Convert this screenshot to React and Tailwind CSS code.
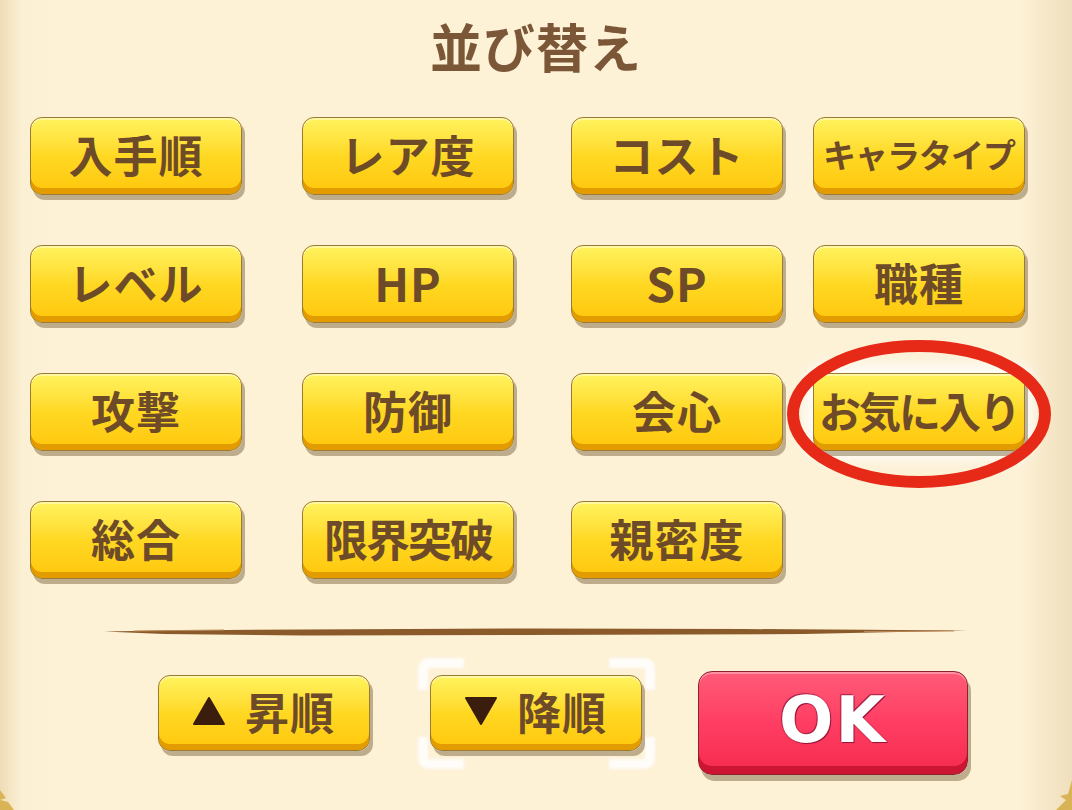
const FONT = { fontFamily: '"Noto Sans CJK JP", "Noto Sans", sans-serif' }

const rows = [
  [{ t: '入手順' }, { t: 'レア度' }, { t: 'コスト' }, { t: 'キャラタイプ', size: 'text-[33px] tracking-[-1px]' }],
  [{ t: 'レベル' }, { t: 'HP', size: 'text-[46px] tracking-[1px]' }, { t: 'SP', size: 'text-[46px] tracking-[1px]' }, { t: '職種' }],
  [{ t: '攻撃' }, { t: '防御' }, { t: '会心' }, { t: 'お気に入り', size: 'text-[42px] tracking-[-2px]', glow: true }],
  [{ t: '総合' }, { t: '限界突破', size: 'text-[44px] tracking-[-2px]' }, { t: '親密度' }],
]

function YellowButton({ children, className = '', textClass = 'text-[44px]', glow }) {
  return (
    <div
      className={
        'flex items-center justify-center rounded-[12px] border border-[#9c7a34] bg-linear-to-b from-[#fff35c] via-[#ffd822] to-[#ffc70a] ' +
        (glow
          ? 'shadow-[inset_0_-6px_0_#e39c00,inset_0_2px_0_#fff8a0,3px_5px_0_rgba(110,90,50,0.45),0_0_14px_8px_rgba(255,255,255,0.9)] '
          : 'shadow-[inset_0_-6px_0_#e39c00,inset_0_2px_0_#fff8a0,3px_5px_0_rgba(110,90,50,0.45)] ') +
        className
      }
    >
      <span className={'font-bold leading-none text-[#6e4b28] pb-[4px] whitespace-nowrap ' + textClass}>{children}</span>
    </div>
  )
}

function Corner({ className }) {
  return <div className={'absolute border-white/85 blur-[1.5px] ' + className} />
}

export default function App() {
  return (
    <div
      style={FONT}
      className="relative w-[1072px] h-[810px] overflow-hidden bg-[linear-gradient(to_right,#efdcb6,#fcf0d4_22px,#fdf1d6_60px,#fdf1d6_1020px,#f6e8c9_1045px,#efdfbd)]"
    >
      <div className="pt-[14px] text-center text-[52px] leading-[64px] font-bold text-[#7b5637] tracking-[1px]">
        並び替え
      </div>

      <div className="mt-[39px] ml-[30px] grid grid-cols-[272px_269px_242px_212px] gap-y-[50px]">
        {rows.flat().map((b) => (
          <YellowButton
            key={b.t}
            glow={b.glow}
            className="w-[212px] h-[78px]"
            textClass={b.size || 'text-[44px] tracking-[1px]'}
          >
            {b.t}
          </YellowButton>
        ))}
      </div>

      <svg className="mt-[47px] ml-[104px]" width="864" height="12" viewBox="0 0 864 12">
        <path
          d="M0 5.5 L60 4.5 L200 3.5 L420 2.5 L640 3 L864 4.5 L700 8 L420 9 L200 9.5 L60 8 Z"
          fill="#8b5a2b"
        />
        <path d="M30 5 L120 4 M760 5.5 L850 5" stroke="#b98a5a" strokeWidth="1" />
      </svg>

      <div className="mt-[37px] ml-[158px] flex items-start">
        <YellowButton className="w-[212px] h-[76px]" textClass="text-[44px] tracking-[1px]">
          <span className="flex items-center gap-[20px]">
            <svg width="32" height="28" viewBox="0 0 32 28">
              <path d="M16 1 L31 27 L1 27 Z" fill="#3b1d0e" strokeLinejoin="round" stroke="#3b1d0e" strokeWidth="2" />
            </svg>
            昇順
          </span>
        </YellowButton>

        <div className="relative ml-[60px]">
          <Corner className="-left-[12px] -top-[17px] w-[46px] h-[32px] border-l-[10px] border-t-[10px] rounded-tl-[10px]" />
          <Corner className="-right-[13px] -top-[17px] w-[46px] h-[32px] border-r-[10px] border-t-[10px] rounded-tr-[10px]" />
          <Corner className="-left-[12px] -bottom-[18px] w-[46px] h-[32px] border-l-[10px] border-b-[10px] rounded-bl-[10px]" />
          <Corner className="-right-[13px] -bottom-[18px] w-[46px] h-[32px] border-r-[10px] border-b-[10px] rounded-br-[10px]" />
          <YellowButton className="relative w-[212px] h-[76px]" textClass="text-[44px] tracking-[1px]">
            <span className="flex items-center gap-[20px]">
              <svg width="32" height="28" viewBox="0 0 32 28">
                <path d="M1 1 L31 1 L16 27 Z" fill="#3b1d0e" strokeLinejoin="round" stroke="#3b1d0e" strokeWidth="2" />
              </svg>
              降順
            </span>
          </YellowButton>
        </div>

        <div className="ml-[56px] -mt-[4px] w-[270px] h-[104px] flex items-center justify-center rounded-[14px] border border-[#8a2030] bg-linear-to-b from-[#ff5a78] via-[#ff3d63] to-[#f52a4e] shadow-[inset_0_-8px_0_#cc1433,inset_0_2px_0_#ff90a4,3px_6px_0_rgba(110,90,50,0.45)]">
          <span
            className="pb-[6px] text-[64px] leading-none font-black text-white tracking-[2px] [text-shadow:0_0_2px_#9b1538,1px_1px_0_#9b1538,-1px_-1px_0_#b0264a]"
            style={{ fontFamily: '"DejaVu Sans", "Noto Sans", sans-serif' }}
          >
            OK
          </span>
        </div>
      </div>

      <svg className="absolute left-[786px] top-[339px]" width="266" height="152" viewBox="0 0 266 152">
        <ellipse cx="133" cy="75" rx="126" ry="68" fill="none" stroke="#e62a17" strokeWidth="12" />
      </svg>

      <svg className="absolute left-0 bottom-0" width="24" height="24" viewBox="0 0 24 24">
        <path d="M0 4 L6 12 L0 14 L8 16 L14 24 L0 24 Z" fill="#d9b456" />
      </svg>
      <svg className="absolute right-0 bottom-0" width="34" height="30" viewBox="0 0 34 30">
        <path d="M34 0 L30 14 L22 16 L28 20 L18 30 L34 30 Z" fill="#d9b456" />
      </svg>
    </div>
  )
}
